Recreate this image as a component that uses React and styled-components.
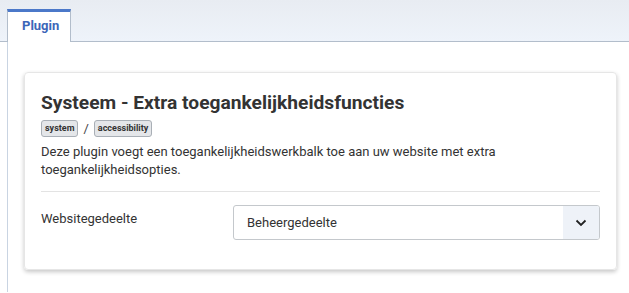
import React from 'react'
import styled, { createGlobalStyle } from 'styled-components'

const Global = createGlobalStyle`
  body {
    margin: 0;
    background: #fff;
    font-family: Roboto, "Liberation Sans", sans-serif;
    color: #22262a;
  }
`

const TabBar = styled.div`
  display: flex;
  align-items: flex-end;
  height: 41px;
  padding-left: 7px;
  background: linear-gradient(#e8ecf2, #eef3fa);
  border-bottom: 1px solid #b2bdcb;
`

const Tab = styled.div`
  box-sizing: border-box;
  width: 64px;
  height: 33px;
  margin-bottom: -1px;
  background: #fff;
  border: 1px solid #b2bdcb;
  border-top: 3px solid #4b78c9;
  border-bottom: none;
  color: #3b66b8;
  font-size: 13px;
  font-weight: 700;
  padding: 6px 0 0 14px;
`

const Panel = styled.div`
  margin-left: 7px;
  border-left: 1px solid #c9d4e2;
  padding: 30px 12px 22px 16px;
`

const Card = styled.div`
  border: 1px solid #e6e6e6;
  border-radius: 4px;
  box-shadow: 0 2px 4px rgba(0, 0, 0, 0.22);
  padding: 16px 16px 29px 16px;
`

const Title = styled.h1`
  margin: 0;
  font-size: 19.2px;
  font-weight: 700;
  color: #333;
  line-height: 28px;
`

const Tags = styled.div`
  display: flex;
  align-items: center;
  gap: 5px;
  margin-top: 3px;
  font-size: 13px;
  color: #444;
`

const Tag = styled.span`
  display: inline-block;
  box-sizing: border-box;
  height: 17px;
  line-height: 15px;
  padding: 0 3px;
  font-size: 9px;
  font-weight: 700;
  color: #333;
  background: #e4e6e9;
  border: 1px solid #a9afb6;
  border-radius: 3px;
`

const Desc = styled.p`
  margin: 6px 0 0;
  font-size: 13px;
  line-height: 18px;
  color: #333;
`

const Divider = styled.hr`
  border: 0;
  border-top: 1px solid #e3e3e3;
  margin: 12px 0 13px;
`

const Row = styled.div`
  display: flex;
  align-items: flex-start;
`

const Label = styled.label`
  width: 192px;
  font-size: 13px;
  color: #333;
  padding-top: 6px;
`

const Select = styled.div`
  flex: 1;
  display: flex;
  height: 35px;
  box-sizing: border-box;
  border: 1px solid #c4c8cc;
  border-radius: 3px;
  overflow: hidden;
`

const Value = styled.div`
  flex: 1;
  padding-left: 13px;
  display: flex;
  align-items: center;
  font-size: 13px;
  color: #333;
`

const Caret = styled.div`
  width: 36px;
  display: flex;
  align-items: center;
  justify-content: center;
  background: #eef2f8;
`

export default function App() {
  return (
    <>
      <Global />
      <TabBar>
        <Tab>Plugin</Tab>
      </TabBar>
      <Panel>
        <Card>
          <Title>Systeem - Extra toegankelijkheidsfuncties</Title>
          <Tags>
            <Tag>system</Tag>/<Tag>accessibility</Tag>
          </Tags>
          <Desc>
            Deze plugin voegt een toegankelijkheidswerkbalk toe aan uw website met extra
            toegankelijkheidsopties.
          </Desc>
          <Divider />
          <Row>
            <Label>Websitegedeelte</Label>
            <Select>
              <Value>Beheergedeelte</Value>
              <Caret>
                <svg width="12" height="8" viewBox="0 0 12 8" fill="none">
                  <path d="M1.5 1.5 6 6l4.5-4.5" stroke="#222" strokeWidth="1.8" />
                </svg>
              </Caret>
            </Select>
          </Row>
        </Card>
      </Panel>
    </>
  )
}
